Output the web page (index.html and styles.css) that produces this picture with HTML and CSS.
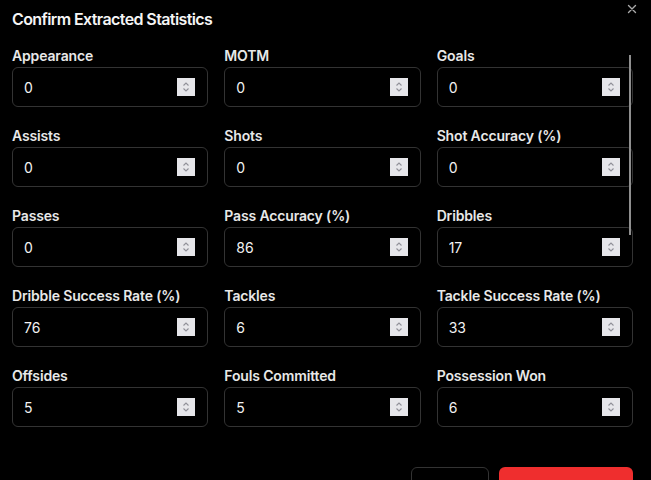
FILE: index.html
```html
<!DOCTYPE html>
<html lang="en">
<head>
<meta charset="utf-8">
<title>Confirm Extracted Statistics</title>
<link rel="stylesheet" href="styles.css">
</head>
<body>
<div class="dialog">
  <header class="dialog-header">
    <h2 class="dialog-title">Confirm Extracted Statistics</h2>
    <button class="close-btn" aria-label="Close">
      <svg viewBox="0 0 10 10" width="10" height="10"><path d="M1.5 1.5 L8.5 8.5 M8.5 1.5 L1.5 8.5" stroke="currentColor" stroke-width="1.4" stroke-linecap="round" fill="none"/></svg>
    </button>
  </header>
  <div class="dialog-body">
    <div class="stats-grid">
      <label class="field"><span class="field-label">Appearance</span><span class="input-box"><input class="field-input" type="text" value="0"><span class="spinner"></span></span></label>
      <label class="field"><span class="field-label">MOTM</span><span class="input-box"><input class="field-input" type="text" value="0"><span class="spinner"></span></span></label>
      <label class="field"><span class="field-label">Goals</span><span class="input-box"><input class="field-input" type="text" value="0"><span class="spinner"></span></span></label>
      <label class="field"><span class="field-label">Assists</span><span class="input-box"><input class="field-input" type="text" value="0"><span class="spinner"></span></span></label>
      <label class="field"><span class="field-label">Shots</span><span class="input-box"><input class="field-input" type="text" value="0"><span class="spinner"></span></span></label>
      <label class="field"><span class="field-label">Shot Accuracy (%)</span><span class="input-box"><input class="field-input" type="text" value="0"><span class="spinner"></span></span></label>
      <label class="field"><span class="field-label">Passes</span><span class="input-box"><input class="field-input" type="text" value="0"><span class="spinner"></span></span></label>
      <label class="field"><span class="field-label">Pass Accuracy (%)</span><span class="input-box"><input class="field-input" type="text" value="86"><span class="spinner"></span></span></label>
      <label class="field"><span class="field-label">Dribbles</span><span class="input-box"><input class="field-input" type="text" value="17"><span class="spinner"></span></span></label>
      <label class="field"><span class="field-label">Dribble Success Rate (%)</span><span class="input-box"><input class="field-input" type="text" value="76"><span class="spinner"></span></span></label>
      <label class="field"><span class="field-label">Tackles</span><span class="input-box"><input class="field-input" type="text" value="6"><span class="spinner"></span></span></label>
      <label class="field"><span class="field-label">Tackle Success Rate (%)</span><span class="input-box"><input class="field-input" type="text" value="33"><span class="spinner"></span></span></label>
      <label class="field"><span class="field-label">Offsides</span><span class="input-box"><input class="field-input" type="text" value="5"><span class="spinner"></span></span></label>
      <label class="field"><span class="field-label">Fouls Committed</span><span class="input-box"><input class="field-input" type="text" value="5"><span class="spinner"></span></span></label>
      <label class="field"><span class="field-label">Possession Won</span><span class="input-box"><input class="field-input" type="text" value="6"><span class="spinner"></span></span></label>
    </div>
    <div class="scroll-thumb"></div>
  </div>
  <footer class="dialog-footer">
    <button class="btn btn-outline">Cancel</button>
    <button class="btn btn-primary">Confirm &amp; Save</button>
  </footer>
</div>
</body>
</html>
```

FILE: styles.css
```css
* { box-sizing: border-box; }
html, body {
  margin: 0;
  padding: 0;
  background: #000;
  height: 480px;
  overflow: hidden;
}
body {
  font-family: Inter, "Noto Sans", sans-serif;
  color: #f2f2f2;
}
.dialog {
  position: relative;
  padding: 8px 18px 0 12px;
}
.dialog-header {
  height: 38px;
}
.dialog-title {
  margin: 0;
  font-size: 16px;
  line-height: 22px;
  font-weight: 600;
  letter-spacing: -0.6px;
  color: #f5f5f5;
}
.close-btn {
  position: absolute;
  top: 3px;
  right: 13px;
  width: 12px;
  height: 12px;
  padding: 1px;
  border: 0;
  background: transparent;
  color: #a9a9a9;
  display: flex;
  align-items: center;
  justify-content: center;
}
.dialog-body {
  position: relative;
}
.stats-grid {
  display: grid;
  grid-template-columns: repeat(3, minmax(0, 1fr));
  column-gap: 16px;
  row-gap: 19px;
}
.field {
  display: flex;
  flex-direction: column;
  gap: 1px;
  min-width: 0;
}
.field-label {
  font-size: 14px;
  line-height: 20px;
  font-weight: 600;
  color: #e8e8e8;
  letter-spacing: -0.15px;
  white-space: nowrap;
}
.input-box {
  display: flex;
  align-items: center;
  height: 40px;
  border: 1px solid #333;
  border-radius: 6px;
  padding: 0 12px 0 11px;
  background: #000;
}
.field-input {
  flex: 1 1 0;
  width: 0;
  min-width: 0;
  height: 100%;
  background: transparent;
  border: 0;
  padding: 0;
  font-family: Inter, "Noto Sans", sans-serif;
  font-size: 14px;
  color: #f2f2f2;
  outline: none;
}
.spinner {
  width: 18px;
  height: 18px;
  flex: none;
  background-color: #e6e6ea;
  background-image: url("data:image/svg+xml,%3Csvg xmlns='http://www.w3.org/2000/svg' viewBox='0 0 18 18'%3E%3Cpath d='M6.5 7.5 L9 5 L11.5 7.5 M6.5 10.5 L9 13 L11.5 10.5' stroke='%23909098' stroke-width='1.1' fill='none'/%3E%3C/svg%3E");
  background-size: 18px 18px;
}
.scroll-thumb {
  position: absolute;
  top: 9px;
  right: 2px;
  width: 2px;
  height: 180px;
  background: #8f8f8f;
}
.dialog-footer {
  display: flex;
  justify-content: flex-end;
  gap: 10px;
  margin-top: 40px;
}
.btn {
  height: 40px;
  border-radius: 6px;
  font-family: Inter, "Noto Sans", sans-serif;
  font-size: 14px;
  font-weight: 500;
  padding: 0 16px;
  white-space: nowrap;
  padding-top: 8px;
}
.btn-outline {
  width: 78px;
  background: #000;
  border: 1px solid #333;
  color: #f2f2f2;
}
.btn-primary {
  width: 134px;
  background: #ef2e2e;
  border: 0;
  color: #fff;
}
```
